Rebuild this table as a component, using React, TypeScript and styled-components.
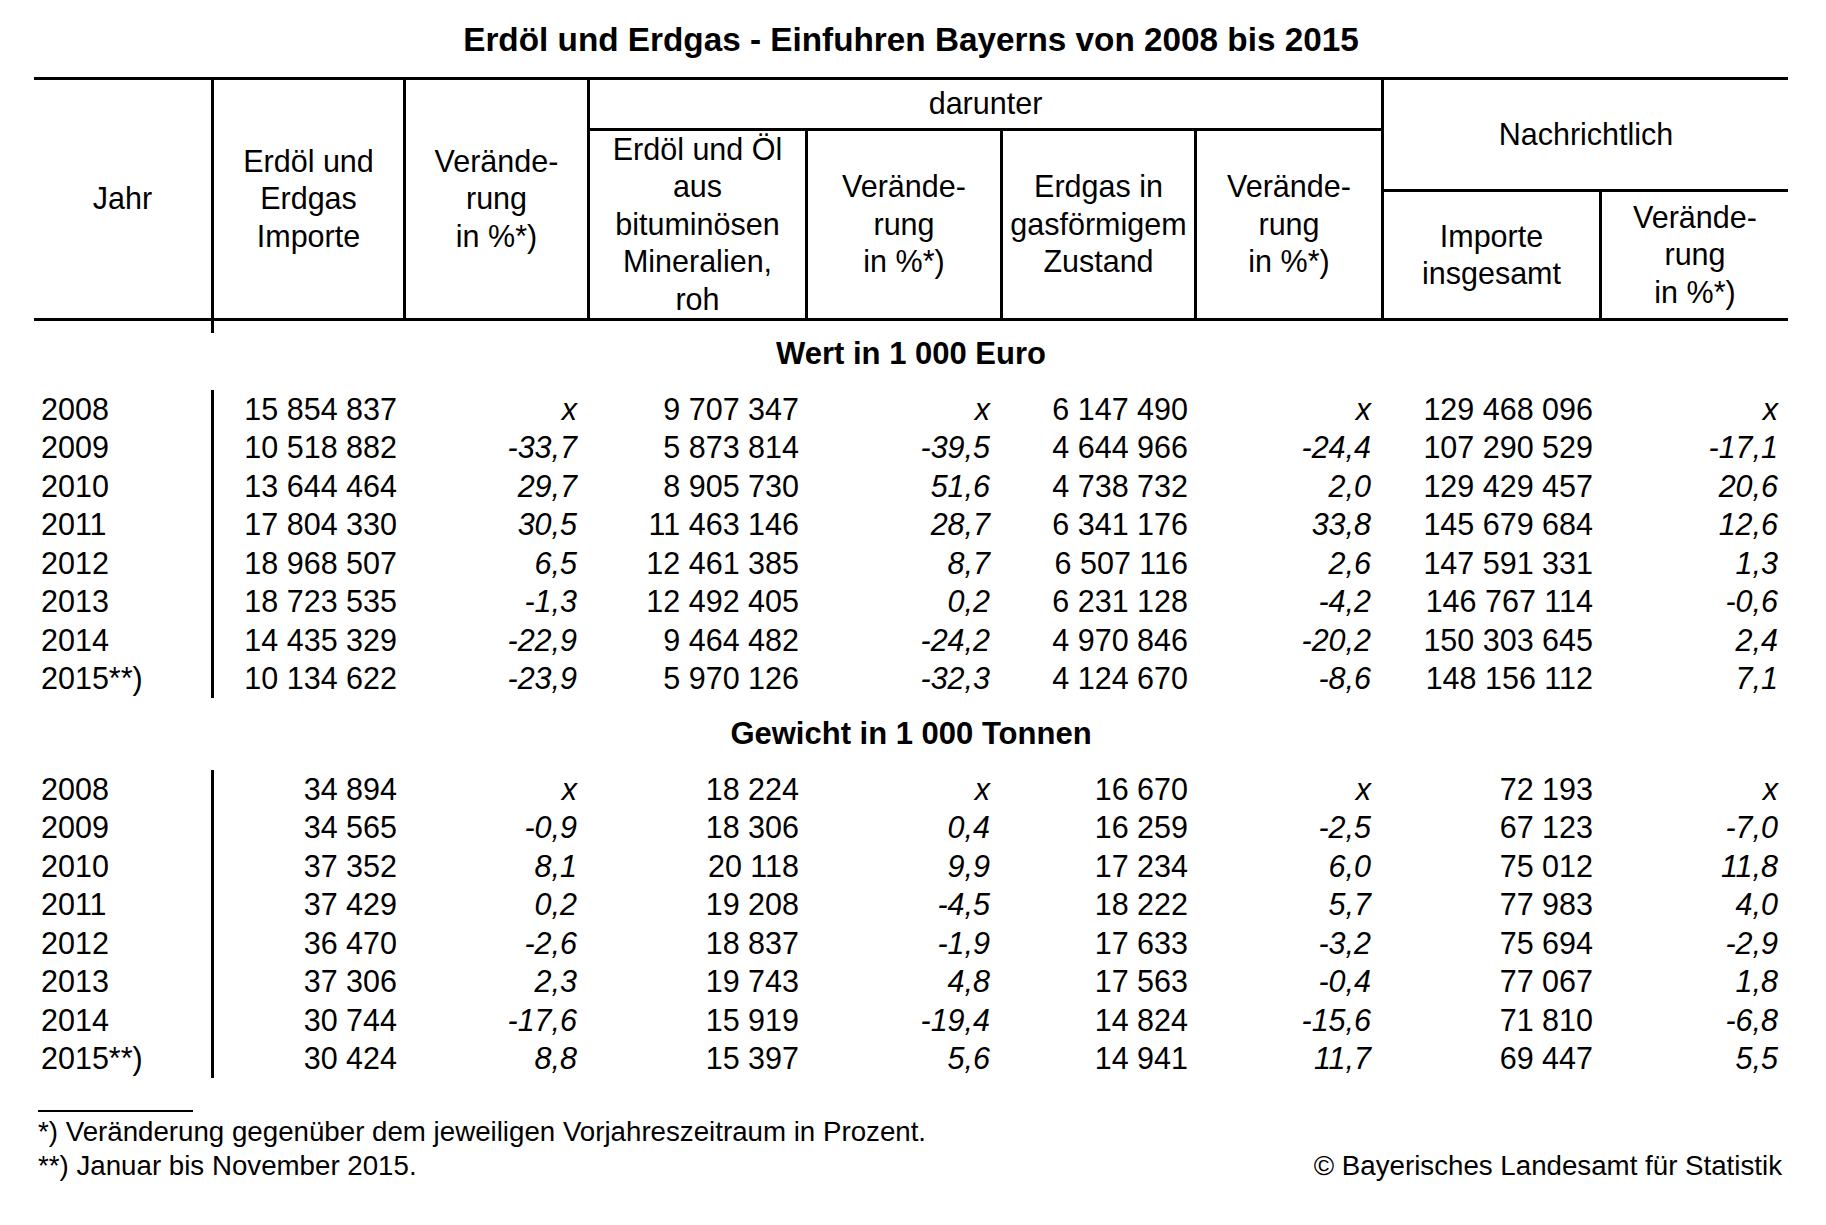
import React from "react";
import styled, { createGlobalStyle } from "styled-components";

const GlobalStyle = createGlobalStyle`
  *, *::before, *::after { box-sizing: border-box; }
  html, body { margin: 0; padding: 0; background: #ffffff; }
  body {
    font-family: "Liberation Sans", Arial, Helvetica, sans-serif;
    color: #000000;
  }
`;

const COLS = "177px 192px 184px 218px 195px 194px 187px 218px 189px";
const RULE = "3px solid #000";

const Page = styled.div`
  width: 1754px;
  margin-left: 34px;
  padding: 21px 0 40px 0;
`;

const Title = styled.h1`
  margin: 0 0 18px 0;
  font-size: 33.3px;
  font-weight: 700;
  line-height: 38px;
  text-align: center;
`;

const Header = styled.div`
  display: grid;
  grid-template-columns: ${COLS};
  grid-template-rows: 51px 61px 126px;
  border-top: ${RULE};
  border-bottom: ${RULE};
`;

const HeadCell = styled.div<{ $col: string; $row: string; $left?: boolean; $bottom?: boolean }>`
  grid-column: ${(p) => p.$col};
  grid-row: ${(p) => p.$row};
  display: flex;
  align-items: center;
  justify-content: center;
  text-align: center;
  font-size: 30.5px;
  line-height: 37.5px;
  white-space: nowrap;
  border-left: ${(p) => (p.$left ? RULE : "none")};
  border-bottom: ${(p) => (p.$bottom ? RULE : "none")};
`;

const Stub = styled.div`
  margin-left: 177px;
  width: 3px;
  height: 12px;
  background: #000;
`;

const SectionTitle = styled.div<{ $first?: boolean }>`
  margin: ${(p) => (p.$first ? "2px 0 17px 0" : "17px 0 17px 0")};
  font-size: 31px;
  font-weight: 700;
  line-height: 38px;
  text-align: center;
`;

const DataGrid = styled.div`
  display: grid;
  grid-template-columns: ${COLS};
  grid-auto-rows: 38.5px;
  font-size: 30.5px;
`;

type Kind = "year" | "num" | "chg";

const DataCell = styled.div<{ $kind: Kind; $divider?: boolean; $edge?: boolean }>`
  display: flex;
  align-items: center;
  white-space: nowrap;
  justify-content: ${(p) => (p.$kind === "year" ? "flex-start" : "flex-end")};
  padding: ${(p) =>
    p.$kind === "year" ? "0 0 0 7px" : p.$kind === "num" ? "0 6px 0 0" : p.$edge ? "0 10px 0 0" : "0 10px 0 0"};
  font-style: ${(p) => (p.$kind === "chg" ? "italic" : "normal")};
  border-left: ${(p) => (p.$divider ? RULE : "none")};
`;

const FootRule = styled.div`
  width: 155px;
  height: 2px;
  margin: 32px 0 3px 4px;
  background: #000;
`;

const FootLine = styled.div`
  display: flex;
  justify-content: space-between;
  padding: 0 6px 0 4px;
  font-size: 27.7px;
  line-height: 34px;
  white-space: nowrap;
`;

type Row = [string, string, string, string, string, string, string, string, string];

const euro: Row[] = [
  ["2008", "15 854 837", "x", "9 707 347", "x", "6 147 490", "x", "129 468 096", "x"],
  ["2009", "10 518 882", "-33,7", "5 873 814", "-39,5", "4 644 966", "-24,4", "107 290 529", "-17,1"],
  ["2010", "13 644 464", "29,7", "8 905 730", "51,6", "4 738 732", "2,0", "129 429 457", "20,6"],
  ["2011", "17 804 330", "30,5", "11 463 146", "28,7", "6 341 176", "33,8", "145 679 684", "12,6"],
  ["2012", "18 968 507", "6,5", "12 461 385", "8,7", "6 507 116", "2,6", "147 591 331", "1,3"],
  ["2013", "18 723 535", "-1,3", "12 492 405", "0,2", "6 231 128", "-4,2", "146 767 114", "-0,6"],
  ["2014", "14 435 329", "-22,9", "9 464 482", "-24,2", "4 970 846", "-20,2", "150 303 645", "2,4"],
  ["2015**)", "10 134 622", "-23,9", "5 970 126", "-32,3", "4 124 670", "-8,6", "148 156 112", "7,1"],
];

const tonnes: Row[] = [
  ["2008", "34 894", "x", "18 224", "x", "16 670", "x", "72 193", "x"],
  ["2009", "34 565", "-0,9", "18 306", "0,4", "16 259", "-2,5", "67 123", "-7,0"],
  ["2010", "37 352", "8,1", "20 118", "9,9", "17 234", "6,0", "75 012", "11,8"],
  ["2011", "37 429", "0,2", "19 208", "-4,5", "18 222", "5,7", "77 983", "4,0"],
  ["2012", "36 470", "-2,6", "18 837", "-1,9", "17 633", "-3,2", "75 694", "-2,9"],
  ["2013", "37 306", "2,3", "19 743", "4,8", "17 563", "-0,4", "77 067", "1,8"],
  ["2014", "30 744", "-17,6", "15 919", "-19,4", "14 824", "-15,6", "71 810", "-6,8"],
  ["2015**)", "30 424", "8,8", "15 397", "5,6", "14 941", "11,7", "69 447", "5,5"],
];

const kindOf = (i: number): Kind => (i === 0 ? "year" : i % 2 === 1 ? "num" : "chg");

const Block: React.FC<{ rows: Row[] }> = ({ rows }) => (
  <DataGrid>
    {rows.map((row) =>
      row.map((v, i) => (
        <DataCell key={row[0] + "-" + i} $kind={kindOf(i)} $divider={i === 1} $edge={i === 8}>
          {v.replace(/ /g, "\u00a0")}
        </DataCell>
      ))
    )}
  </DataGrid>
);

const Change = () => (
  <>
    Verände-
    <br />
    rung
    <br />
    in %*)
  </>
);

export default function App() {
  return (
    <>
      <GlobalStyle />
      <Page>
        <Title>Erdöl und Erdgas - Einfuhren Bayerns von 2008 bis 2015</Title>
        <Header>
          <HeadCell $col="1" $row="1 / 4">Jahr</HeadCell>
          <HeadCell $col="2" $row="1 / 4" $left>
            <span>
              Erdöl und
              <br />
              Erdgas
              <br />
              Importe
            </span>
          </HeadCell>
          <HeadCell $col="3" $row="1 / 4" $left>
            <span>
              <Change />
            </span>
          </HeadCell>
          <HeadCell $col="4 / 8" $row="1" $left $bottom>
            darunter
          </HeadCell>
          <HeadCell $col="4" $row="2 / 4" $left>
            <span>
              Erdöl und Öl
              <br />
              aus
              <br />
              bituminösen
              <br />
              Mineralien,
              <br />
              roh
            </span>
          </HeadCell>
          <HeadCell $col="5" $row="2 / 4" $left>
            <span>
              <Change />
            </span>
          </HeadCell>
          <HeadCell $col="6" $row="2 / 4" $left>
            <span>
              Erdgas in
              <br />
              gasförmigem
              <br />
              Zustand
            </span>
          </HeadCell>
          <HeadCell $col="7" $row="2 / 4" $left>
            <span>
              <Change />
            </span>
          </HeadCell>
          <HeadCell $col="8 / 10" $row="1 / 3" $left $bottom>
            Nachrichtlich
          </HeadCell>
          <HeadCell $col="8" $row="3" $left>
            <span>
              Importe
              <br />
              insgesamt
            </span>
          </HeadCell>
          <HeadCell $col="9" $row="3" $left>
            <span>
              <Change />
            </span>
          </HeadCell>
        </Header>
        <Stub />
        <SectionTitle $first>Wert in 1 000 Euro</SectionTitle>
        <Block rows={euro} />
        <SectionTitle>Gewicht in 1 000 Tonnen</SectionTitle>
        <Block rows={tonnes} />
        <FootRule />
        <FootLine>
          <span>*) Veränderung gegenüber dem jeweiligen Vorjahreszeitraum in Prozent.</span>
        </FootLine>
        <FootLine>
          <span>**) Januar bis November 2015.</span>
          <span>© Bayerisches Landesamt für Statistik</span>
        </FootLine>
      </Page>
    </>
  );
}
